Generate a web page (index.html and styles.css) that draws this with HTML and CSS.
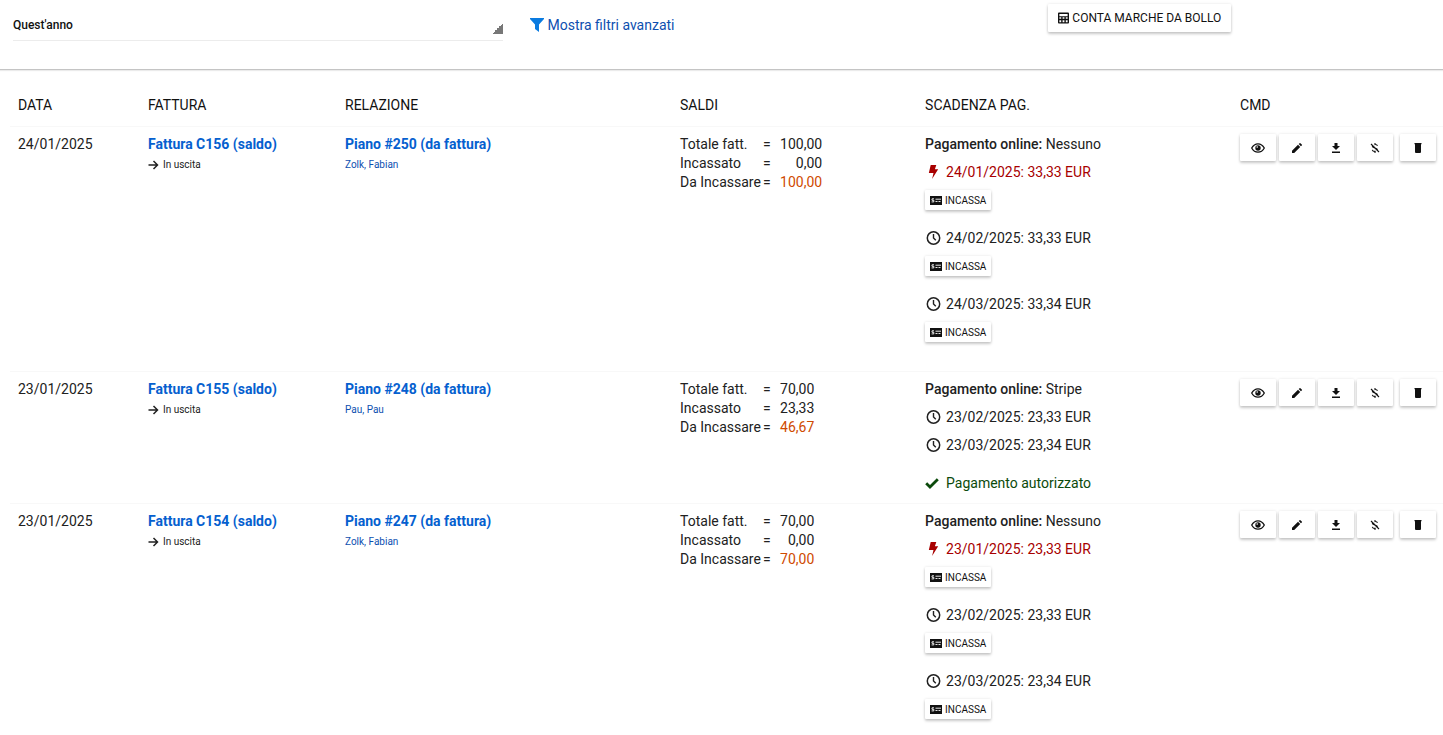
FILE: index.html
```html
<!DOCTYPE html>
<html lang="it">
<head>
<meta charset="utf-8">
<title>Fatture</title>
<link rel="stylesheet" href="styles.css">
</head>
<body>
<svg class="sprite" aria-hidden="true">
  <symbol id="i-filter" viewBox="0 0 14 14"><path d="M0 0h14v1L9 6.500V14L5 11V6.500L0 1z"/></symbol>
  <symbol id="i-calc" viewBox="0 0 12 12"><path fill-rule="evenodd" d="M1 0h10a1 1 0 0 1 1 1v10a1 1 0 0 1-1 1H1a1 1 0 0 1-1-1V1a1 1 0 0 1 1-1zM1.500 1.500v2.500h9V1.500zM1.500 5.300v1.500h2V5.300zM5 5.300v1.500h2V5.300zM8.500 5.300v1.500h2V5.300zM1.500 8.500v2h2v-2zM5 8.500v2h2v-2zM8.500 8.500v2h2v-2z"/></symbol>
  <symbol id="i-arrow" viewBox="0 0 10 10"><path d="M0 5h9M5 1l4 4-4 4" fill="none" stroke="currentColor" stroke-width="1.500"/></symbol>
  <symbol id="i-bolt" viewBox="0 0 10 15"><path d="M2 0h6L6.500 4.500H10L3.500 15 5 8.500H0z"/></symbol>
  <symbol id="i-clock" viewBox="0 0 14 14"><circle cx="7" cy="7" r="6.200" fill="none" stroke="currentColor" stroke-width="1.500"/><path d="M7 3v4l2.300 2.300" fill="none" stroke="currentColor" stroke-width="1.400"/></symbol>
  <symbol id="i-check" viewBox="0 0 14 11"><path d="M1.200 5.200 5 9 12.800 1.200" fill="none" stroke="currentColor" stroke-width="2.800"/></symbol>
  <symbol id="i-money" viewBox="0 0 12 9"><path d="M0 0h12v9H0z"/><path d="M4 2.800H2v1.500h1.800v1.600H1.600M5.500 3.200H11M5.500 5.500h2M8.500 5.500h2" fill="none" stroke="#fff" stroke-width=".9"/></symbol>
  <symbol id="i-eye" viewBox="0 0 14 10"><path d="M.7 5C2.200 2.300 4.400.8 7 .8S11.800 2.300 13.300 5C11.800 7.700 9.600 9.200 7 9.200S2.200 7.700.7 5z" fill="none" stroke="currentColor" stroke-width="1.300"/><circle cx="7" cy="5" r="2.700"/><circle cx="6.200" cy="4" r=".8" fill="#fff"/></symbol>
  <symbol id="i-pencil" viewBox="0 0 10 10"><path d="M0 10V7.800L6 1.800 8.200 4l-6 6zM6.700 1.100 7.600.2q.4-.4.8 0L9.800 1.600q.4.4 0 .8L8.900 3.300z"/></symbol>
  <symbol id="i-download" viewBox="0 0 10 10"><path d="M3.500 0h3v3H9L5 7 1 3h2.500zM1 8.500h8V10H1z"/></symbol>
  <symbol id="i-nomoney" viewBox="0 0 10 10"><path d="M1 1l8 8M7.500 2.800C7 1.600 5.800 1.300 4.500 1.600M2.300 3c0 1.500 1.500 1.700 2.700 2 1.500.4 2.500.9 2.500 2M2.300 6.800c.4 1.400 2 1.800 3.500 1.500M5 0v1.600M5 8.300V10" fill="none" stroke="currentColor" stroke-width="1.100"/></symbol>
  <symbol id="i-trash" viewBox="0 0 10 10"><path d="M1.500 0h7v1.200h-7zM2 1h6V9a1 1 0 0 1-1 1H3a1 1 0 0 1-1-1z"/></symbol>
</svg>

<header class="filters">
  <div class="period">
    <select class="period-select" aria-label="Periodo"><option>Quest'anno</option></select>
  </div>
  <a class="advanced" href="#"><svg class="icon icon-filter"><use href="#i-filter"/></svg>Mostra filtri avanzati</a>
  <button class="btn btn-stamps" type="button"><svg class="icon icon-calc"><use href="#i-calc"/></svg>CONTA MARCHE DA BOLLO</button>
</header>

<main class="content">
  <table class="invoices">
    <colgroup><col class="c-date"><col class="c-invoice"><col class="c-relation"><col class="c-balance"><col class="c-due"><col class="c-cmd"></colgroup>
    <thead>
      <tr><th>DATA</th><th>FATTURA</th><th>RELAZIONE</th><th>SALDI</th><th>SCADENZA PAG.</th><th>CMD</th></tr>
    </thead>
    <tbody>
      <tr>
        <td>24/01/2025</td>
        <td><a class="main-link" href="#">Fattura C156 (saldo)</a><div class="sub"><svg class="icon icon-arrow"><use href="#i-arrow"/></svg>In uscita</div></td>
        <td><a class="main-link" href="#">Piano #250 (da fattura)</a><a class="sub sub-link" href="#">Zolk, Fabian</a></td>
        <td><div class="balance"><span>Totale fatt.</span><span>=</span><span class="num">100,00</span><span>Incassato</span><span>=</span><span class="num">0,00</span><span>Da Incassare</span><span>=</span><span class="num open">100,00</span></div></td>
        <td>
          <div><b>Pagamento online:</b> Nessuno</div>
          <ul class="dues">
            <li><div class="due late"><svg class="icon icon-due"><use href="#i-bolt"/></svg>24/01/2025: 33,33 EUR</div><button class="btn btn-cash" type="button"><svg class="icon icon-money"><use href="#i-money"/></svg>INCASSA</button></li>
            <li><div class="due"><svg class="icon icon-due"><use href="#i-clock"/></svg>24/02/2025: 33,33 EUR</div><button class="btn btn-cash" type="button"><svg class="icon icon-money"><use href="#i-money"/></svg>INCASSA</button></li>
            <li><div class="due"><svg class="icon icon-due"><use href="#i-clock"/></svg>24/03/2025: 33,34 EUR</div><button class="btn btn-cash" type="button"><svg class="icon icon-money"><use href="#i-money"/></svg>INCASSA</button></li>
          </ul>
        </td>
        <td><div class="cmds"><button class="btn btn-cmd" type="button" aria-label="Vedi"><svg class="icon icon-eye"><use href="#i-eye"/></svg></button><button class="btn btn-cmd" type="button" aria-label="Modifica"><svg class="icon icon-cmd"><use href="#i-pencil"/></svg></button><button class="btn btn-cmd" type="button" aria-label="Scarica"><svg class="icon icon-cmd"><use href="#i-download"/></svg></button><button class="btn btn-cmd" type="button" aria-label="Storna"><svg class="icon icon-cmd"><use href="#i-nomoney"/></svg></button><button class="btn btn-cmd btn-delete" type="button" aria-label="Elimina"><svg class="icon icon-cmd"><use href="#i-trash"/></svg></button></div></td>
      </tr>
      <tr>
        <td>23/01/2025</td>
        <td><a class="main-link" href="#">Fattura C155 (saldo)</a><div class="sub"><svg class="icon icon-arrow"><use href="#i-arrow"/></svg>In uscita</div></td>
        <td><a class="main-link" href="#">Piano #248 (da fattura)</a><a class="sub sub-link" href="#">Pau, Pau</a></td>
        <td><div class="balance"><span>Totale fatt.</span><span>=</span><span class="num">70,00</span><span>Incassato</span><span>=</span><span class="num">23,33</span><span>Da Incassare</span><span>=</span><span class="num open">46,67</span></div></td>
        <td>
          <div><b>Pagamento online:</b> Stripe</div>
          <ul class="dues">
            <li><div class="due"><svg class="icon icon-due"><use href="#i-clock"/></svg>23/02/2025: 23,33 EUR</div></li>
            <li><div class="due"><svg class="icon icon-due"><use href="#i-clock"/></svg>23/03/2025: 23,34 EUR</div></li>
          </ul>
          <div class="authorized"><svg class="icon icon-check"><use href="#i-check"/></svg>Pagamento autorizzato</div>
        </td>
        <td><div class="cmds"><button class="btn btn-cmd" type="button" aria-label="Vedi"><svg class="icon icon-eye"><use href="#i-eye"/></svg></button><button class="btn btn-cmd" type="button" aria-label="Modifica"><svg class="icon icon-cmd"><use href="#i-pencil"/></svg></button><button class="btn btn-cmd" type="button" aria-label="Scarica"><svg class="icon icon-cmd"><use href="#i-download"/></svg></button><button class="btn btn-cmd" type="button" aria-label="Storna"><svg class="icon icon-cmd"><use href="#i-nomoney"/></svg></button><button class="btn btn-cmd btn-delete" type="button" aria-label="Elimina"><svg class="icon icon-cmd"><use href="#i-trash"/></svg></button></div></td>
      </tr>
      <tr>
        <td>23/01/2025</td>
        <td><a class="main-link" href="#">Fattura C154 (saldo)</a><div class="sub"><svg class="icon icon-arrow"><use href="#i-arrow"/></svg>In uscita</div></td>
        <td><a class="main-link" href="#">Piano #247 (da fattura)</a><a class="sub sub-link" href="#">Zolk, Fabian</a></td>
        <td><div class="balance"><span>Totale fatt.</span><span>=</span><span class="num">70,00</span><span>Incassato</span><span>=</span><span class="num">0,00</span><span>Da Incassare</span><span>=</span><span class="num open">70,00</span></div></td>
        <td>
          <div><b>Pagamento online:</b> Nessuno</div>
          <ul class="dues">
            <li><div class="due late"><svg class="icon icon-due"><use href="#i-bolt"/></svg>23/01/2025: 23,33 EUR</div><button class="btn btn-cash" type="button"><svg class="icon icon-money"><use href="#i-money"/></svg>INCASSA</button></li>
            <li><div class="due"><svg class="icon icon-due"><use href="#i-clock"/></svg>23/02/2025: 23,33 EUR</div><button class="btn btn-cash" type="button"><svg class="icon icon-money"><use href="#i-money"/></svg>INCASSA</button></li>
            <li><div class="due"><svg class="icon icon-due"><use href="#i-clock"/></svg>23/03/2025: 23,34 EUR</div><button class="btn btn-cash" type="button"><svg class="icon icon-money"><use href="#i-money"/></svg>INCASSA</button></li>
          </ul>
        </td>
        <td><div class="cmds"><button class="btn btn-cmd" type="button" aria-label="Vedi"><svg class="icon icon-eye"><use href="#i-eye"/></svg></button><button class="btn btn-cmd" type="button" aria-label="Modifica"><svg class="icon icon-cmd"><use href="#i-pencil"/></svg></button><button class="btn btn-cmd" type="button" aria-label="Scarica"><svg class="icon icon-cmd"><use href="#i-download"/></svg></button><button class="btn btn-cmd" type="button" aria-label="Storna"><svg class="icon icon-cmd"><use href="#i-nomoney"/></svg></button><button class="btn btn-cmd btn-delete" type="button" aria-label="Elimina"><svg class="icon icon-cmd"><use href="#i-trash"/></svg></button></div></td>
      </tr>
    </tbody>
  </table>
</main>
</body>
</html>
```
FILE: styles.css
```css
* {
  box-sizing: border-box;
}

body {
  margin: 0;
  background: #fff;
  color: #212121;
  font: 14px/20px Roboto, "Liberation Sans", sans-serif;
}

.sprite {
  display: none;
}

.icon {
  flex: none;
  fill: currentColor;
}

a {
  color: #0d4fb0;
  text-decoration: none;
}

.btn {
  display: inline-flex;
  align-items: center;
  justify-content: center;
  border: 0;
  border-radius: 1px;
  background: #fff;
  color: #111;
  font-family: inherit;
  box-shadow: 0 2px 3px rgba(0, 0, 0, .2), 0 0 3px rgba(0, 0, 0, .1);
}

/* Filter bar */

.filters {
  display: grid;
  grid-template-columns: 34.3% 1fr 27.6%;
  column-gap: 27px;
  align-items: start;
  padding: 4px 0 28px 13px;
  border-bottom: 1px solid #c4c4c4;
  box-shadow: 0 1px 1px rgba(0, 0, 0, .08);
}

.period {
  border-bottom: 1px solid #ececec;
}

.period-select {
  display: block;
  width: 100%;
  height: 36px;
  padding: 6px 0 0;
  border: 0;
  appearance: none;
  background: linear-gradient(135deg, transparent 50%, #777 50%) right 0 bottom 6px / 11px 11px no-repeat;
  color: #111;
  font: 500 12px/20px Roboto, "Liberation Sans", sans-serif;
}

.advanced {
  display: flex;
  align-items: center;
  gap: 3px;
  padding-top: 11px;
}

.icon-filter {
  width: 14px;
  height: 14px;
  color: #0a7be0;
}

.btn-stamps {
  justify-self: start;
  gap: 3px;
  height: 28px;
  padding: 0 10px;
  font-size: 12px;
}

.icon-calc {
  width: 11px;
  height: 12px;
}

/* Invoice table */

.content {
  padding: 15px 0 0 10px;
}

.invoices {
  width: 100%;
  border-collapse: separate;
  border-spacing: 0;
  table-layout: fixed;
}

.c-date { width: 9.07%; }
.c-invoice { width: 13.75%; }
.c-relation { width: 23.38%; }
.c-balance { width: 17.1%; }
.c-due { width: 21.98%; }
.c-cmd { width: 14.72%; }

th,
td {
  padding: 7px 0 9px 8px;
  text-align: left;
  vertical-align: top;
}

th {
  padding: 10px 0 11px 8px;
  color: #111;
  font-weight: 400;
}

td {
  border-top: 1px solid #f8f8f8;
}

b {
  font-weight: 500;
}

.main-link {
  display: block;
  color: #0560cf;
  font-weight: 700;
}

.sub {
  display: flex;
  align-items: center;
  gap: 4px;
  padding-top: 1px;
  font-size: 10px;
}

.icon-arrow {
  width: 11px;
  height: 10px;
}

.balance {
  display: grid;
  grid-template-columns: 83px 17px max-content;
  padding-top: 1px;
  line-height: 19px;
}

.num {
  text-align: right;
}

.open {
  color: #cf4a00;
}

.dues {
  margin: 0 0 10px;
  padding: 0;
  list-style: none;
}

.dues li {
  margin-top: 8px;
}

.due {
  display: flex;
  align-items: center;
  gap: 4px;
}

.late {
  color: #a80000;
}

.icon-due {
  width: 17px;
  height: 14px;
}

.btn-cash {
  gap: 3px;
  height: 20px;
  margin: 8px 0 10px;
  padding: 0 5px;
  font-size: 10px;
  vertical-align: top;
}

.icon-money {
  width: 12px;
  height: 9px;
}

tr:last-child .dues,
tr:last-child li:last-child .btn-cash {
  margin-bottom: 0;
}

.authorized {
  display: flex;
  align-items: center;
  gap: 7px;
  margin-top: 18px;
  padding-bottom: 1px;
  color: #0b4a0b;
}

.icon-check {
  width: 14px;
  height: 11px;
}

.cmds {
  display: flex;
  gap: 3px;
}

.btn-cmd {
  width: 36px;
  height: 27px;
  padding: 0;
}

.btn-delete {
  margin-left: 4px;
}

.icon-eye {
  width: 14px;
  height: 10px;
}

.icon-cmd {
  width: 10px;
  height: 10px;
}
```
